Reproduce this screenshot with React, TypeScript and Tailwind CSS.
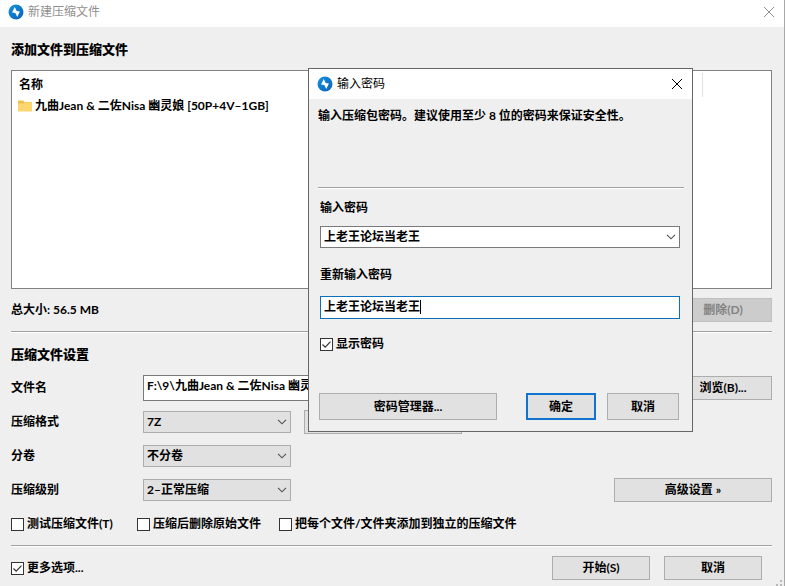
import { useState } from 'react';
import type { ReactNode } from 'react';
import clsx from 'clsx';

interface ButtonProps {
    children?: ReactNode
    className?: string
    disabled?: boolean
    primary?: boolean
    label?: string
}

const Button = ({ children, className, disabled, primary, label }: ButtonProps) => (
    <button
        type="button"
        disabled={disabled}
        aria-label={label}
        className={clsx(
            'shrink-0 text-center',
            primary ? 'border-2 border-[#0e74cf] bg-[#e1e1e1]' : 'border',
            !primary && !disabled && 'border-[#adadad] bg-[#e1e1e1]',
            disabled && 'border-[#bfbfbf] bg-[#cccccc] text-[#838383]',
            className
        )}
    >
        {children}
    </button>
);

const AppIcon = () => (
    <svg viewBox="0 0 16 16" className="size-4 shrink-0" aria-hidden="true">
        <defs>
            <linearGradient id="logo" x1="0" y1="0" x2="1" y2="1">
                <stop offset="0" stopColor="#1492dc" />
                <stop offset="1" stopColor="#0a63bd" />
            </linearGradient>
        </defs>
        <circle cx="8" cy="8" r="7.5" fill="url(#logo)" />
        <path d="M6.7 3 8.7 7 11.9 7.5 9.3 13 7.3 9 4.1 8.5Z" fill="#fff" />
    </svg>
);

const CloseIcon = () => (
    <svg viewBox="0 0 12 12" className="size-3" fill="none" stroke="currentColor" strokeWidth="1" aria-hidden="true">
        <path d="M1 1 11 11M11 1 1 11" />
    </svg>
);

const Chevron = () => (
    <svg viewBox="0 0 10 6" className="h-[6px] w-[10px]" fill="none" stroke="#505050" strokeWidth="1.1" aria-hidden="true">
        <path d="M1 .8 5 4.8 9 .8" />
    </svg>
);

const FolderIcon = () => (
    <svg viewBox="0 0 14 12" className="h-3 w-[14px] shrink-0" aria-hidden="true">
        <path d="M0 1.2Q0 .5.7.5H5L6.4 2H13.3Q14 2 14 2.7V6H0Z" fill="#f0c04f" />
        <path d="M0 3.6H5.4L6.6 2.6H14V10.8Q14 11.5 13.3 11.5H.7Q0 11.5 0 10.8Z" fill="#fcd66f" />
    </svg>
);

const Separator = () => <div className="h-[2px] border-t border-[#a0a0a0] bg-white" />;

const CheckBox = ({ label, checked: initial = false }: { label: string, checked?: boolean }) => {
    const [checked, setChecked] = useState<boolean>(initial);

    return (
        <label className="flex items-center gap-[3px]">
            <span className="grid size-[13px] shrink-0">
                <input
                    type="checkbox"
                    checked={checked}
                    onChange={() => setChecked(!checked)}
                    className="col-start-1 row-start-1 size-[13px] appearance-none border border-[#333] bg-white"
                />
                {checked && (
                    <svg viewBox="0 0 13 13" className="pointer-events-none col-start-1 row-start-1" fill="none" stroke="#333" strokeWidth="1.2" aria-hidden="true">
                        <path d="M2.5 6.5 5.2 9.2 10.5 3.6" />
                    </svg>
                )}
            </span>
            <span>{label}</span>
        </label>
    );
};

const SelectRow = ({ id, label, options, children }: { id: string, label: string, options: string[], children?: ReactNode }) => (
    <div className="flex h-[34px] items-center">
        <label htmlFor={id} className="w-[132px] shrink-0">{label}</label>
        <div className="grid w-[148px] shrink-0 items-center">
            <select id={id} className="col-start-1 row-start-1 h-[22px] w-full appearance-none border border-[#adadad] bg-[#e1e1e1] px-[3px]">
                {options.map((option) => <option key={option}>{option}</option>)}
            </select>
            <span className="pointer-events-none col-start-1 row-start-1 mr-1 justify-self-end">
                <Chevron />
            </span>
        </div>
        {children}
    </div>
);

const PasswordDialog = () => {
    const [password, setPassword] = useState<string>('上老王论坛当老王');
    const [repeated, setRepeated] = useState<string>('上老王论坛当老王');

    return (
        <section role="dialog" aria-label="输入密码" className="absolute top-[68px] right-[91px] w-[385px] border border-[#666] bg-[#efefef]">
            <header className="flex h-[30px] items-center gap-1 bg-white px-2 font-normal">
                <AppIcon />
                <h2 className="flex-1">输入密码</h2>
                <button type="button" aria-label="关闭" className="mr-px">
                    <CloseIcon />
                </button>
            </header>

            <div className="pt-2 pr-2 pl-[9px]">
                <p className="h-20">输入压缩包密码。建议使用至少 8 位的密码来保证安全性。</p>
                <Separator />
            </div>

            <div className="flex flex-col pt-[10px] pr-3 pl-[11px]">
                <label htmlFor="password">输入密码</label>
                <div className="mt-[9px] flex h-[22px] items-center border border-[#7a7a7a] bg-white">
                    <input
                        id="password"
                        value={password}
                        onChange={(e) => setPassword(e.target.value)}
                        className="min-w-0 flex-1 px-[3px] outline-none"
                    />
                    <button type="button" aria-label="密码列表" className="px-[3px]">
                        <Chevron />
                    </button>
                </div>

                <label htmlFor="repeat" className="mt-[18px]">重新输入密码</label>
                <div className="mt-3 flex h-[23px] items-center border border-[#0a6fbd] bg-white px-[3px] pb-[2px]">
                    <input
                        id="repeat"
                        value={repeated}
                        onChange={(e) => setRepeated(e.target.value)}
                        className="field-sizing-content outline-none"
                    />
                    <span className="h-[14px] w-px bg-black" />
                </div>

                <div className="mt-4 flex">
                    <CheckBox label="显示密码" checked />
                </div>
            </div>

            <div className="mt-10 flex pr-[13px] pb-[11px] pl-[10px]">
                <Button className="h-[27px] w-[178px]">密码管理器...</Button>
                <Button primary className="ml-auto h-[27px] w-[70px]">确定</Button>
                <Button className="ml-[11px] h-[27px] w-[72px]">取消</Button>
            </div>
        </section>
    );
};

export default function App() {
    const [fileName, setFileName] = useState<string>('F:\\9\\九曲Jean & 二佐Nisa 幽灵娘 [50P+4V–1GB].7z');

    return (
        <div className="relative min-h-screen border-r border-[#a8a8a8] bg-[#efefef] font-['Lato','Noto_Sans_CJK_SC',sans-serif] text-[12px] leading-[18px] font-bold text-black">
            <header className="flex h-[27px] items-center gap-1 bg-white pr-[9px] pb-1 pl-2 font-normal text-[#8f8f8f]">
                <AppIcon />
                <h1 className="flex-1">新建压缩文件</h1>
                <button type="button" aria-label="关闭">
                    <CloseIcon />
                </button>
            </header>

            <main className="pt-[13px] pr-3 pl-[11px]">
                <h2 className="text-[13px] font-black">添加文件到压缩文件</h2>

                <div className="mt-3 h-[219px] border border-[#828282] bg-white">
                    <div className="mt-[2px] flex h-6 w-[691px] items-center border-r border-[#e2e2e2] pl-[7px]">名称</div>
                    <div className="flex items-center gap-[3px] pl-[6px]">
                        <FolderIcon />
                        <span>九曲Jean &amp; 二佐Nisa 幽灵娘 [50P+4V–1GB]</span>
                    </div>
                </div>

                <div className="mt-[9px] mb-[9px] flex h-6 items-center justify-between">
                    <span>总大小: 56.5 MB</span>
                    <Button disabled className="h-6 w-[98px]">删除(D)</Button>
                </div>

                <Separator />

                <h2 className="mt-3 text-[13px] font-black">压缩文件设置</h2>

                <div className="mt-2 flex h-[34px] items-center">
                    <label htmlFor="file" className="w-[132px] shrink-0">文件名</label>
                    <input
                        id="file"
                        value={fileName}
                        onChange={(e) => setFileName(e.target.value)}
                        className="h-[26px] min-w-0 flex-1 border border-[#7a7a7a] bg-white px-[3px] pb-2"
                    />
                    <Button className="ml-3 h-6 w-[98px]">浏览(B)...</Button>
                </div>
                <SelectRow id="format" label="压缩格式" options={['7Z', 'ZIP', 'TAR']}>
                    <Button label="设置密码" className="ml-[13px] h-6 w-[158px]" />
                </SelectRow>
                <SelectRow id="volume" label="分卷" options={['不分卷', '10 MB', '100 MB']} />
                <SelectRow id="level" label="压缩级别" options={['2–正常压缩', '1–最快压缩', '3–最好压缩']}>
                    <Button className="ml-auto h-6 w-[158px]">高级设置 »</Button>
                </SelectRow>

                <div className="mb-3 flex h-[26px] items-end">
                    <div className="w-[126px]"><CheckBox label="测试压缩文件(T)" /></div>
                    <div className="w-[142px]"><CheckBox label="压缩后删除原始文件" /></div>
                    <CheckBox label="把每个文件/文件夹添加到独立的压缩文件" />
                </div>

                <Separator />

                <div className="mt-[9px] flex items-center gap-[14px] pr-[10px]">
                    <div className="flex-1"><CheckBox label="更多选项..." checked /></div>
                    <Button className="h-6 w-[98px]">开始(S)</Button>
                    <Button className="h-6 w-[98px]">取消</Button>
                </div>
            </main>

            <svg viewBox="0 0 6 6" className="absolute right-[2px] bottom-0 size-[6px]" fill="#b8b8b8" aria-hidden="true">
                <path d="M4 0H6V2H4ZM0 4H2V6H0ZM4 4H6V6H4Z" />
            </svg>

            <PasswordDialog />
        </div>
    );
}
